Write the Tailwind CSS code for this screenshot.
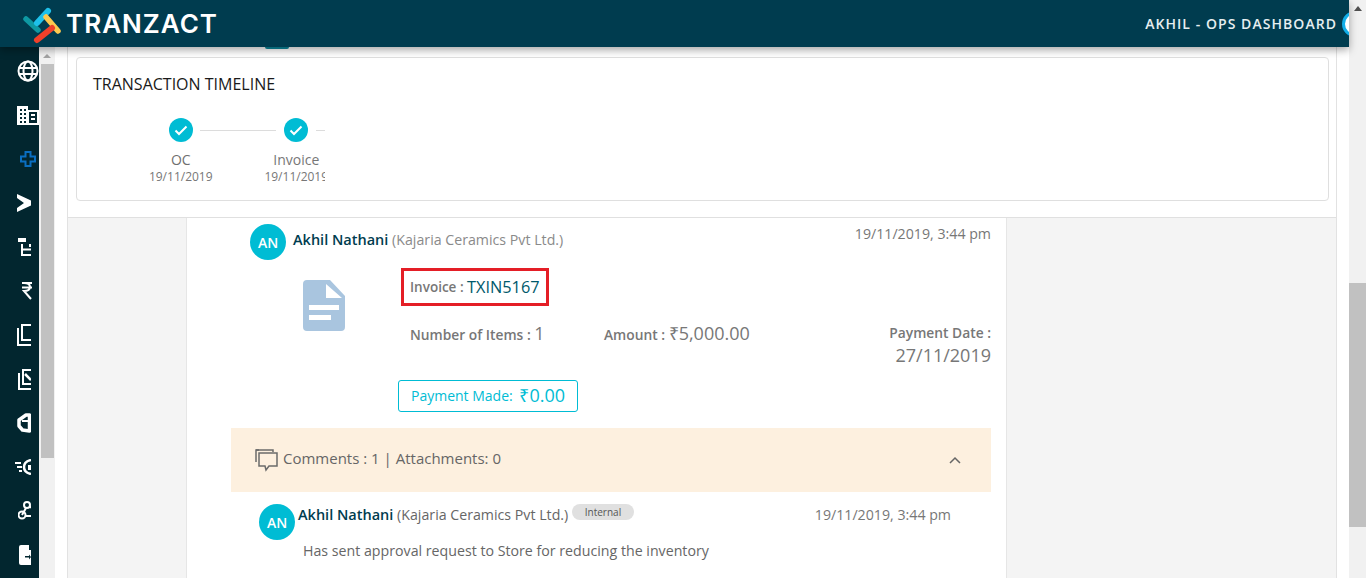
<!DOCTYPE html>
<html lang="en">
<head>
  <meta charset="UTF-8" />
  <title>Tranzact - Ops Dashboard</title>
  <script src="https://cdn.jsdelivr.net/npm/@tailwindcss/browser@4"></script>
</head>
<body class="h-[578px] w-[1366px] overflow-hidden flex font-['Open_Sans',sans-serif] bg-white">

  <div class="w-[1349px] h-full flex flex-col">
    <!-- Header -->
    <header class="relative z-10 h-[47px] shrink-0 bg-[#003c4f] shadow-[0_3px_8px_rgba(0,0,0,0.35)] flex items-center justify-between">
      <div class="flex items-center pl-[23px]">
        <svg class="w-[40px] h-[40px]" viewBox="0 0 40 40" fill="none" stroke-linecap="round" stroke-width="5.500">
          <path d="M3 15 L15 26" stroke="#0e98a3"/>
          <path d="M14 19 L25 7" stroke="#1ec0ea" stroke-width="6"/>
          <path d="M23 13 L35 27" stroke="#fdc94f"/>
          <path d="M14 36 L29 24" stroke="#f0402a" stroke-width="6"/>
        </svg>
        <span class="ml-[3px] text-[26px] leading-none font-['Inter',sans-serif] font-semibold text-white tracking-[1px]">TRANZACT</span>
      </div>
      <div class="flex items-center overflow-hidden">
        <span class="text-[14px] font-semibold text-[#e6eef0] tracking-[1.05px]">AKHIL - OPS DASHBOARD</span>
        <span class="ml-[5px] -mr-[19px] w-[26px] h-[26px] rounded-full bg-white border-[3px] border-[#12aee8]"></span>
      </div>
    </header>

    <div class="flex flex-1 min-h-0">
      <!-- Sidebar -->
      <nav class="w-[39px] shrink-0 bg-[#02262f] overflow-hidden pt-[2px] text-white">
        <div class="h-[44px] pl-[17px] flex items-center">
          <svg class="w-[22px] h-[22px] shrink-0" viewBox="0 0 22 22" fill="none" stroke="#fff" stroke-width="2"><circle cx="11" cy="11" r="9.500"/><ellipse cx="11" cy="11" rx="4.500" ry="9.500"/><path d="M2 8h18M2 14h18"/></svg>
        </div>
        <div class="h-[44px] pl-[17px] flex items-center">
          <svg class="w-[22px] h-[20px] shrink-0" viewBox="0 0 22 20" fill="#fff"><path fill-rule="evenodd" d="M0 1h11v4h11v15H0zM3 4v2h2V4zm4 0v2h2V4zM3 8v2h2V8zm4 0v2h2V8zm-4 4v2h2v-2zm4 0v2h2v-2zm-4 4v2h2v-2zm4 0v2h2v-2zM12 7v11h8V7zm2 2h4v2h-4zm0 4h4v2h-4z"/></svg>
        </div>
        <div class="h-[44px] pl-[20px] flex items-center">
          <svg class="w-[16px] h-[16px] shrink-0" viewBox="0 0 16 16" fill="none" stroke="#0a6fc2" stroke-width="2"><path d="M5.500 1h5v4.500H15v5h-4.500V15h-5v-4.500H1v-5h4.500z"/></svg>
        </div>
        <div class="h-[44px] pl-[17px] flex items-center">
          <svg class="w-[14px] h-[18px] shrink-0" viewBox="0 0 14 18" fill="#fff"><path d="M0 0L14 6.500V11.500L0 18V14L7 9L0 4z"/></svg>
        </div>
        <div class="h-[44px] pl-[18px] flex items-center">
          <svg class="w-[13px] h-[18px] shrink-0" viewBox="0 0 13 18" fill="none"><rect x="0" y="0" width="8" height="4" fill="#fff"/><path d="M4 6v11h9M4 11.500h9M12 6v3" stroke="#fff" stroke-width="2"/></svg>
        </div>
        <div class="h-[44px] pl-[22px] flex items-center">
          <svg class="w-[10px] h-[18px] shrink-0" viewBox="0 0 10 18" fill="none" stroke="#fff" stroke-width="2"><path d="M0 1h10M0 5.500h10M2 1c5 0 6 2 6 4s-2 4-6 4l7 8"/></svg>
        </div>
        <div class="h-[44px] pl-[17px] flex items-center">
          <svg class="w-[14px] h-[22px] shrink-0" viewBox="0 0 14 22" fill="none" stroke="#fff" stroke-width="2"><path d="M14 1H5v15h9M2 5H1v16h13"/></svg>
        </div>
        <div class="h-[44px] pl-[18px] flex items-center">
          <svg class="w-[13px] h-[21px] shrink-0" viewBox="0 0 13 21" fill="none" stroke="#fff" stroke-width="2"><path d="M13 1H5v14h8M2 5H1v15h12"/><path d="M7 5l6 6" stroke-width="2.500"/></svg>
        </div>
        <div class="h-[44px] pl-[17px] flex items-center">
          <svg class="w-[14px] h-[20px] shrink-0" viewBox="0 0 14 20" fill="none" stroke="#fff" stroke-width="3.500" stroke-linejoin="round"><path d="M9 2h3.500v16l-7-1L2 13V7z"/><path d="M5 8h8" stroke-width="2"/></svg>
        </div>
        <div class="h-[44px] pl-[15px] flex items-center">
          <svg class="w-[16px] h-[16px] shrink-0" viewBox="0 0 16 16" fill="none" stroke="#fff" stroke-width="2"><path d="M0 4h6M2 8h5M4 12h3"/><path d="M16 1c-5 1-7 4-7 7s2 6 7 7" stroke-width="2.500"/><path d="M13 6h3v5h-3z" fill="#fff" stroke="none"/></svg>
        </div>
        <div class="h-[44px] pl-[18px] flex items-center">
          <svg class="w-[13px] h-[20px] shrink-0" viewBox="0 0 13 20" fill="none" stroke="#fff" stroke-width="2"><circle cx="9" cy="4" r="3"/><circle cx="4" cy="14" r="3.500"/><path d="M8 7l-4 7M7 15h6M12 5l1 2"/></svg>
        </div>
        <div class="h-[44px] pl-[19px] flex items-center">
          <svg class="w-[12px] h-[20px] shrink-0" viewBox="0 0 12 20" fill="#fff"><path fill-rule="evenodd" d="M2 0h8v5h2v15H2a2 2 0 0 1-2-2V2a2 2 0 0 1 2-2zM6 11v1.500h4V14.500l2-2.500-2-2.500V11z"/></svg>
        </div>
      </nav>

      <!-- Sidebar scrollbar -->
      <div class="w-[16px] shrink-0 bg-[#f1f1f1] pl-[2px] flex flex-col">
        <div class="h-[17px] flex items-center justify-center pr-[2px]">
          <span class="border-x-[4px] border-x-transparent border-b-[4px] border-b-[#a3a3a3]"></span>
        </div>
        <div class="w-[13px] h-[394px] bg-[#c1c1c1]"></div>
      </div>

      <!-- Content -->
      <main class="flex-1 min-w-0 bg-white px-[12px] overflow-hidden">
        <div class="h-full bg-[#f4f4f4] border-x border-[#e2e2e2]">
          <section class="relative h-[171px] bg-white border-b border-[#e0e0e0] pt-[10px] pl-[8px] pr-[7px]">
            <span class="absolute left-[197px] top-0 w-[24px] h-[2px] bg-[#0b8a9f] rounded-b"></span>
            <div class="h-[144px] border border-[#dfdfdf] rounded-[4px] pt-[14px] pl-[16px]">
              <h2 class="text-[16px] leading-[24px] text-[#1a1a1a] font-normal">TRANSACTION TIMELINE</h2>
              <div class="w-[232px] overflow-hidden mt-[22px] pl-[27px] flex">
                <div class="w-[115.500px] shrink-0 pl-[6px] flex flex-col items-center relative">
                  <span class="w-[24px] h-[24px] rounded-full bg-[#00bcd4] flex items-center justify-center">
                    <svg class="w-[14px] h-[14px]" viewBox="0 0 14 14" fill="none" stroke="#fff" stroke-width="2"><path d="M1.500 7.500l3.500 3.500 7.500-7.500"/></svg>
                  </span>
                  <span class="absolute left-[80px] top-[12px] w-[76px] h-px bg-[#dcdcdc]"></span>
                  <span class="text-[14px] leading-[19px] text-[#6f6f6f] mt-[8px]">OC</span>
                  <span class="text-[12px] leading-[16px] text-[#777]">19/11/2019</span>
                </div>
                <div class="w-[115.500px] shrink-0 pl-[6px] flex flex-col items-center relative">
                  <span class="w-[24px] h-[24px] rounded-full bg-[#00bcd4] flex items-center justify-center">
                    <svg class="w-[14px] h-[14px]" viewBox="0 0 14 14" fill="none" stroke="#fff" stroke-width="2"><path d="M1.500 7.500l3.500 3.500 7.500-7.500"/></svg>
                  </span>
                  <span class="absolute left-[80px] top-[12px] w-[76px] h-px bg-[#dcdcdc]"></span>
                  <span class="text-[14px] leading-[19px] text-[#777] mt-[8px]">Invoice</span>
                  <span class="text-[12px] leading-[16px] text-[#777] whitespace-nowrap">19/11/2019</span>
                </div>
              </div>
            </div>
          </section>

          <!-- Activity card -->
          <section class="ml-[118px] w-[821px] h-[400px] bg-white border-x border-[#e6e6e6] pl-[44px] pr-[15px]">
            <div class="flex items-start pl-[19px] pt-[6px]">
              <span class="w-[36px] h-[36px] rounded-full bg-[#00bcd4] text-white text-[14px] font-semibold flex items-center justify-center">AN</span>
              <div class="ml-[7px] mt-[6px] text-[14.500px] leading-[20px] text-[#003c4f] font-semibold">Akhil Nathani <span class="text-[14.200px] font-normal text-[#8a8a8a]">(Kajaria Ceramics Pvt Ltd.)</span></div>
              <span class="ml-auto text-[14.200px] leading-[20px] text-[#777]">19/11/2019, 3:44 pm</span>
            </div>

            <div class="flex mt-[8px]">
              <div class="w-[167px] shrink-0 pl-[72px] pt-[12px]">
                <svg class="w-[42px] h-[51px]" viewBox="0 0 42 51"><path fill-rule="evenodd" fill="#a9c5df" d="M4 0h23l15 16v31a4 4 0 0 1-4 4H4a4 4 0 0 1-4-4V4a4 4 0 0 1 4-4zM23 4v14h16zM6 25v5h30v-5zM6 35v5h22v-5z"/></svg>
              </div>
              <div class="flex-1 min-w-0">
                <div class="ml-[3px] inline-flex items-center h-[38px] w-[148px] px-[6px] border-[3px] border-[#e41e26] text-[13.500px] font-semibold text-[#777] whitespace-nowrap">Invoice :&nbsp;<span class="text-[16.300px] font-normal text-[#00596b]">TXIN5167</span></div>
                <div class="flex mt-[13px] pl-[12px] items-start">
                  <div class="w-[194px] text-[13.800px] leading-[28px] font-semibold text-[#777]">Number of Items : <span class="text-[18px] font-normal">1</span></div>
                  <div class="text-[13.800px] leading-[28px] font-semibold text-[#777]">Amount : <span class="text-[18px] font-normal">₹5,000.00</span></div>
                  <div class="ml-auto text-right pt-[2px]">
                    <div class="text-[13.800px] leading-[24px] font-semibold text-[#777]">Payment Date :</div>
                    <div class="text-[18px] leading-[21px] text-[#777]">27/11/2019</div>
                  </div>
                </div>
                <div class="inline-flex items-center h-[32px] mt-[14px] px-[12px] pb-[1px] border border-[#00bcd4] rounded-[3px] text-[14px] text-[#00bcd4] whitespace-nowrap">Payment Made:&nbsp;<span class="ml-[3px] text-[18px]">₹0.00</span></div>
              </div>
            </div>

            <div class="h-[64px] mt-[16px] bg-[#fdf0df] flex items-center pl-[24px] pr-[30px]">
              <svg class="w-[23px] h-[23px] shrink-0" viewBox="0 0 23 23" fill="none" stroke="#6b6b6b" stroke-width="1.500"><path d="M4 1H1v12M4 14V4h18v13H14l-3 4-1-4H4z"/><path d="M1 1h17v2"/></svg>
              <span class="ml-[5px] pb-[3px] text-[15px] text-[#666]">Comments : 1 | Attachments: 0</span>
              <svg class="ml-auto w-[12px] h-[8px]" viewBox="0 0 12 8" fill="none" stroke="#666" stroke-width="1.500"><path d="M1 7l5-5 5 5"/></svg>
            </div>

            <div class="flex items-start pl-[28px] pr-[40px] pt-[12px]">
              <span class="w-[36px] h-[36px] shrink-0 rounded-full bg-[#00bcd4] text-white text-[14px] font-semibold flex items-center justify-center">AN</span>
              <div class="min-w-0 flex-1 ml-[3px]">
                <div class="flex items-start">
                  <div class="mt-[1px] text-[14.500px] leading-[20px] text-[#003c4f] font-semibold">Akhil Nathani <span class="text-[14.200px] font-normal text-[#666]">(Kajaria Ceramics Pvt Ltd.)</span></div>
                  <span class="ml-[4px] h-[16px] px-[12.500px] rounded-full bg-[#e0e0e0] text-[10px] leading-[16px] text-[#555]">Internal</span>
                  <span class="ml-auto mt-[1px] text-[14.200px] leading-[20px] text-[#777]">19/11/2019, 3:44 pm</span>
                </div>
                <p class="mt-[17px] pl-[5px] text-[14.200px] leading-[18px] text-[#666]">Has sent approval request to Store for reducing the inventory</p>
              </div>
            </div>
          </section>
        </div>
      </main>
    </div>
  </div>

  <!-- Page scrollbar -->
  <div class="w-[17px] h-full bg-[#f1f1f1] flex flex-col">
    <div class="h-[17px] flex items-center justify-center">
      <span class="border-x-[4px] border-x-transparent border-b-[5px] border-b-[#505050]"></span>
    </div>
    <div class="h-[266px] shrink-0"></div>
    <div class="h-[244px] bg-[#c1c1c1]"></div>
  </div>

</body>
</html>
